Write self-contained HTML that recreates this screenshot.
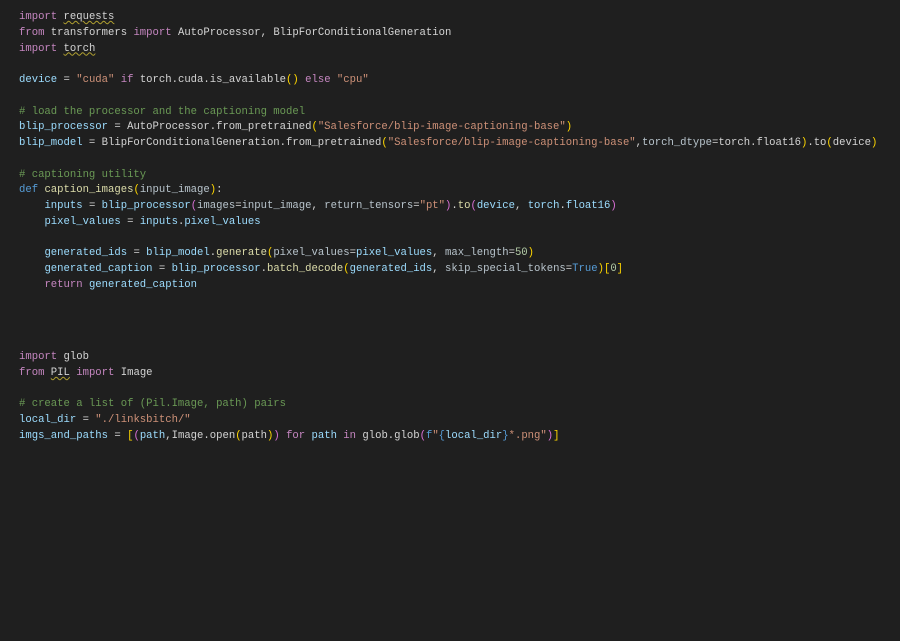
<!DOCTYPE html>
<html><head><meta charset="utf-8"><style>
html,body{margin:0;background:#1f1f1f;width:900px;height:641px;overflow:hidden}
pre{position:absolute;left:19px;margin:0;font-family:"Liberation Mono",monospace;font-size:10.6px;line-height:15.75px;color:#d4d4d4;white-space:pre}
.k{color:#c586c0}.v{color:#9cdcfe}.f{color:#dcdcaa}.s{color:#ce9178}.c{color:#6a9955}.d{color:#569cd6}.n{color:#b5cea8}.p{color:#ffd700}.pp{color:#da70d6}
.u{text-decoration:underline wavy #b0a030;text-decoration-thickness:1px}
.g{color:#b8c4cc}
</style></head><body>
<pre style="top:10px"><span class="k">import</span> <span class="u">requests</span>
<span class="k">from</span> transformers <span class="k">import</span> AutoProcessor, BlipForConditionalGeneration
<span class="k">import</span> <span class="u">torch</span>

<span class="v">device</span> = <span class="s">"cuda"</span> <span class="k">if</span> torch.cuda.is_available<span class="p">()</span> <span class="k">else</span> <span class="s">"cpu"</span>

<span class="c"># load the processor and the captioning model</span>
<span class="v">blip_processor</span> = AutoProcessor.from_pretrained<span class="p">(</span><span class="s">"Salesforce/blip-image-captioning-base"</span><span class="p">)</span>
<span class="v">blip_model</span> = BlipForConditionalGeneration.from_pretrained<span class="p">(</span><span class="s">"Salesforce/blip-image-captioning-base"</span>,<span class="g">torch_dtype</span>=torch.float16<span class="p">)</span>.to<span class="p">(</span>device<span class="p">)</span>

<span class="c"># captioning utility</span>
<span class="d">def</span> <span class="f">caption_images</span><span class="p">(</span><span class="g">input_image</span><span class="p">)</span>:
    <span class="v">inputs</span> = <span class="v">blip_processor</span><span class="pp">(</span><span class="g">images</span>=<span class="g">input_image</span>, <span class="g">return_tensors</span>=<span class="s">"pt"</span><span class="pp">)</span>.<span class="f">to</span><span class="pp">(</span><span class="v">device</span>, <span class="v">torch</span>.<span class="v">float16</span><span class="pp">)</span>
    <span class="v">pixel_values</span> = <span class="v">inputs</span>.<span class="v">pixel_values</span>

    <span class="v">generated_ids</span> = <span class="v">blip_model</span>.<span class="f">generate</span><span class="p">(</span><span class="g">pixel_values</span>=<span class="v">pixel_values</span>, <span class="g">max_length</span>=<span class="n">50</span><span class="p">)</span>
    <span class="v">generated_caption</span> = <span class="v">blip_processor</span>.<span class="f">batch_decode</span><span class="p">(</span><span class="v">generated_ids</span>, <span class="g">skip_special_tokens</span>=<span class="d">True</span><span class="p">)</span><span class="p">[</span><span class="n">0</span><span class="p">]</span>
    <span class="k">return</span> <span class="v">generated_caption</span></pre>
<pre style="top:350px"><span class="k">import</span> glob
<span class="k">from</span> <span class="u">PIL</span> <span class="k">import</span> Image

<span class="c"># create a list of (Pil.Image, path) pairs</span>
<span class="v">local_dir</span> = <span class="s">"./linksbitch/"</span>
<span class="v">imgs_and_paths</span> = <span class="p">[</span><span class="pp">(</span><span class="v">path</span>,Image.open<span class="p">(</span>path<span class="p">)</span><span class="pp">)</span> <span class="k">for</span> <span class="v">path</span> <span class="k">in</span> glob.glob<span class="pp">(</span><span class="d">f</span><span class="s">"</span><span class="d">{</span><span class="v">local_dir</span><span class="d">}</span><span class="s">*.png"</span><span class="pp">)</span><span class="p">]</span></pre>
</body></html>
